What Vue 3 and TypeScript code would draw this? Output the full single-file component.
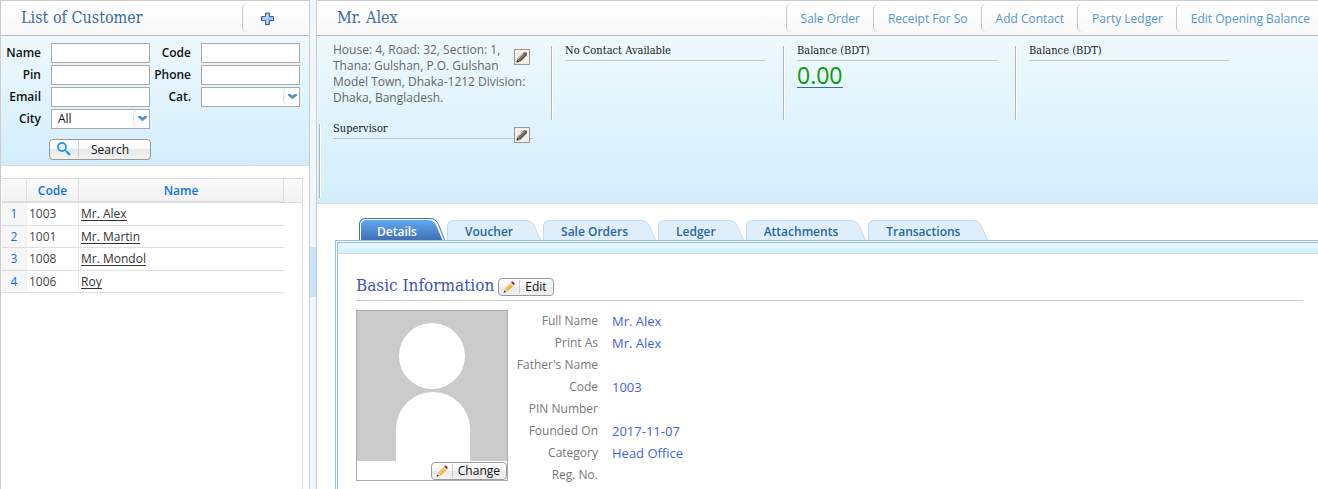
<script setup lang="ts">
import { ref } from 'vue'

interface Customer { code: string; name: string }

const actions = ['Sale Order', 'Receipt For So', 'Add Contact', 'Party Ledger', 'Edit Opening Balance']
const tabs = ['Details', 'Voucher', 'Sale Orders', 'Ledger', 'Attachments', 'Transactions']
const activeTab = ref('Details')
const city = ref('All')
const category = ref('')

const customers: Customer[] = [
  { code: '1003', name: 'Mr. Alex' },
  { code: '1001', name: 'Mr. Martin' },
  { code: '1008', name: 'Mr. Mondol' },
  { code: '1006', name: 'Roy' },
]

const details = [
  { label: 'Full Name', value: 'Mr. Alex' },
  { label: 'Print As', value: 'Mr. Alex' },
  { label: "Father's Name", value: '' },
  { label: 'Code', value: '1003' },
  { label: 'PIN Number', value: '' },
  { label: 'Founded On', value: '2017-11-07' },
  { label: 'Category', value: 'Head Office' },
  { label: 'Reg. No.', value: '' },
]
</script>

<template>
  <div class="app">
    <aside class="sidebar">
      <header class="bar">
        <h1 class="title side-title">List of Customer</h1>
        <button type="button" class="add" aria-label="Add customer">
          <svg width="13" height="13" viewBox="0 0 13 13">
            <path d="M4.500 1h4v3.500h4v4h-4v4h-4v-4h-4v-4h4z" fill="#9dbfec" stroke="#35609f" stroke-linejoin="round" />
            <path d="M6 2.500v3.500h-4M6 10.500v-3" fill="none" stroke="#cfe2fa" />
          </svg>
        </button>
      </header>

      <form class="filters" @submit.prevent>
        <div class="fields">
          <label for="f-name">Name</label><input id="f-name" type="text" />
          <label for="f-code">Code</label><input id="f-code" type="text" />
          <label for="f-pin">Pin</label><input id="f-pin" type="text" />
          <label for="f-phone">Phone</label><input id="f-phone" type="text" />
          <label for="f-email">Email</label><input id="f-email" type="text" />
          <label for="f-cat">Cat.</label>
          <div class="pick">
            <select id="f-cat" v-model="category"><option value=""></option></select>
            <svg class="arrow" width="18" height="18" viewBox="0 0 18 18"><path d="M3.500 1q-2 2-2 5v6q0 3 2 5" fill="none" stroke="#dedede" /><path d="M6 6h2.500l2 1.500 2-1.500h2.500v1.500l-4.500 3.800-4.500-3.800z" fill="#5795c6" /></svg>
          </div>
          <label for="f-city">City</label>
          <div class="pick">
            <select id="f-city" v-model="city"><option>All</option></select>
            <svg class="arrow" width="18" height="18" viewBox="0 0 18 18"><path d="M3.500 1q-2 2-2 5v6q0 3 2 5" fill="none" stroke="#dedede" /><path d="M6 6h2.500l2 1.500 2-1.500h2.500v1.500l-4.500 3.800-4.500-3.800z" fill="#5795c6" /></svg>
          </div>
        </div>
        <button type="submit" class="btn search">
          <span class="btn-icon"><svg width="15" height="15" viewBox="0 0 15 15" fill="none" stroke="#189bf5"><circle cx="5" cy="5" r="4" stroke-width="1.800" /><path d="M8 8l2 2" stroke-width="1.500" /><path d="M9.500 9.500l3.500 3.500" stroke-width="2.400" /></svg></span>
          <span class="btn-text">Search</span>
        </button>
      </form>

      <div class="grid-wrap">
        <table class="grid">
          <colgroup><col class="c-num" /><col class="c-code" /><col class="c-name" /><col class="c-end" /></colgroup>
          <thead><tr><th></th><th>Code</th><th>Name</th><th></th></tr></thead>
          <tbody>
            <tr v-for="(c, i) in customers" :key="c.code">
              <td class="num">{{ i + 1 }}</td>
              <td>{{ c.code }}</td>
              <td><a href="#">{{ c.name }}</a></td>
              <td class="blank"></td>
            </tr>
          </tbody>
        </table>
      </div>
    </aside>

    <div class="splitter"><div class="handle"></div></div>

    <main class="main">
      <header class="bar">
        <h1 class="title">Mr. Alex</h1>
        <nav class="actions">
          <a v-for="a in actions" :key="a" href="#">{{ a }}</a>
        </nav>
      </header>

      <section class="summary">
        <div class="cell plain">
          <p class="address">House: 4, Road: 32, Section: 1, Thana: Gulshan, P.O. Gulshan Model Town, Dhaka-1212 Division: Dhaka, Bangladesh.</p>
          <button type="button" class="pen" aria-label="Edit address">
            <svg width="12" height="12" viewBox="0 0 12 12"><path d="M2.500 9.500l7-7" stroke="#6e6e6e" stroke-width="4" /><path d="M2 8l5.500-5.500" stroke="#b5b5b5" /><path d="M4 10.200l6.200-6.200" stroke="#444" /><path d="M8 1.500h2.500l.5.500v2.500z" fill="#555" /><path d="M.5 11.500l.5-3 2.500 2.500z" fill="#222" /></svg>
          </button>
        </div>
        <div class="cell"><h2>No Contact Available</h2></div>
        <div class="cell"><h2>Balance (BDT)</h2><a class="amount" href="#">0.00</a></div>
        <div class="cell"><h2>Balance (BDT)</h2></div>
        <div class="cell">
          <h2>Supervisor</h2>
          <button type="button" class="pen" aria-label="Edit supervisor">
            <svg width="12" height="12" viewBox="0 0 12 12"><path d="M2.500 9.500l7-7" stroke="#6e6e6e" stroke-width="4" /><path d="M2 8l5.500-5.500" stroke="#b5b5b5" /><path d="M4 10.200l6.200-6.200" stroke="#444" /><path d="M8 1.500h2.500l.5.500v2.500z" fill="#555" /><path d="M.5 11.500l.5-3 2.500 2.500z" fill="#222" /></svg>
          </button>
        </div>
      </section>

      <div class="tabs" role="tablist">
        <button v-for="t in tabs" :key="t" type="button" role="tab" class="tab" :class="{ active: t === activeTab }" :aria-selected="t === activeTab" @click="activeTab = t">
          <span class="tab-label">{{ t }}</span>
          <svg v-if="t === activeTab" class="cap" width="28" height="22" viewBox="0 0 28 22">
            <defs><linearGradient id="tabfill" x1="0" y1="0" x2="0" y2="1"><stop offset="0" stop-color="#62aaf5" /><stop offset="1" stop-color="#3f70b4" /></linearGradient></defs>
            <path d="M0 0h13q6 0 8.500 6l6.500 16h-28z" fill="#fff" />
            <path d="M0 2h12q5 0 7.500 6l6 14h-25.500z" fill="url(#tabfill)" />
            <path d="M0 .5h13q6 0 8.500 6l6 15.500" fill="none" stroke="#3d74b8" />
          </svg>
          <svg v-else class="cap" width="28" height="20" viewBox="0 0 28 20">
            <path d="M0 0.500h13q6 0 8.500 6l6 13.500h-27.500z" fill="#deeefb" />
            <path d="M0 .5h13q6 0 8.500 6l6 13.500" fill="none" stroke="#c2dbee" />
          </svg>
        </button>
      </div>

      <section class="panel">
        <div class="strip"></div>
        <div class="content">
          <div class="section-head">
            <h2>Basic Information</h2>
            <button type="button" class="btn small">
              <span class="btn-icon"><svg width="12" height="12" viewBox="0 0 12 12"><path d="M2 8l5-5.500 3 3-5.500 5z" fill="#f2b233" /><path d="M3 9l5-5.500" stroke="#ffd56b" /><path d="M7 2.500l1-1 3 3-1 1z" fill="#e8dfd0" /><path d="M8 1.500l1-1h1l1.500 1.500v1.500l-.5 1z" fill="#b3202c" /><path d="M2 8l2.500 2.500-3.500 1z" fill="#e9c9a0" /><path d="M1.500 9.500l1.500 1.500-2.500.7z" fill="#222" /></svg></span>
              <span class="btn-text">Edit</span>
            </button>
          </div>
          <div class="profile">
            <div class="photo">
              <svg viewBox="0 0 150 150" role="img" aria-label="Profile photo"><path d="M0 0h150v150h-150z" fill="#cbcbcb" /><circle cx="75" cy="45" r="33" fill="#fff" /><path d="M39 150v-32a37 37 0 0 1 74 0v32z" fill="#fff" /></svg>
              <button type="button" class="btn small">
                <span class="btn-icon"><svg width="12" height="12" viewBox="0 0 12 12"><path d="M2 8l5-5.500 3 3-5.500 5z" fill="#f2b233" /><path d="M3 9l5-5.500" stroke="#ffd56b" /><path d="M7 2.500l1-1 3 3-1 1z" fill="#e8dfd0" /><path d="M8 1.500l1-1h1l1.500 1.500v1.500l-.5 1z" fill="#b3202c" /><path d="M2 8l2.500 2.500-3.500 1z" fill="#e9c9a0" /><path d="M1.500 9.500l1.500 1.500-2.500.7z" fill="#222" /></svg></span>
                <span class="btn-text">Change</span>
              </button>
            </div>
            <dl class="details">
              <template v-for="d in details" :key="d.label"><dt>{{ d.label }}</dt><dd>{{ d.value }}</dd></template>
            </dl>
          </div>
        </div>
      </section>
    </main>
  </div>
</template>

<style>
body { margin: 0; overflow: hidden; background: #fff; }
</style>

<style scoped>
.app { display: flex; height: 100vh; overflow: hidden; font: 12px/16px "Open Sans", "Noto Sans", sans-serif; color: #444; }
.app *, .app *::before { box-sizing: border-box; }
h1, h2, p, dl, dd { margin: 0; font-weight: 400; }
button, input, select { font: inherit; }
a { text-decoration: none; }
.sidebar { flex: 0 0 310px; display: flex; flex-direction: column; border: 1px solid #ccc; border-bottom: 0; }
.bar { display: flex; align-items: center; height: 35px; flex: none; background: linear-gradient(#fff, #f8f8f8); border-bottom: 1px solid #bbb; }
.title { flex: 1; padding-left: 20px; font: 16px/32px "DejaVu Serif Condensed", "DejaVu Serif", serif; font-stretch: condensed; color: #3a6ba5; white-space: nowrap; }
.add { width: 67px; height: 28px; padding: 0 18px; display: flex; align-items: center; background: none; border: 0; border-left: 1px solid #c6c6c6; border-radius: 5px; }

.filters { height: 130px; flex: none; padding: 7px 9px 0 7px; background: linear-gradient(#eef9fe, #d2eefb); border-bottom: 1px solid #ddd; color: #111; }
.fields { display: grid; grid-template-columns: 33px 99px 31px 99px; column-gap: 10px; row-gap: 2px; }
.fields label { justify-self: end; line-height: 20px; font-weight: 600; white-space: nowrap; }
.fields input, .fields select { width: 100%; height: 20px; padding: 0 6px; border: 1px solid #aaa; border-radius: 0; background: #fff; color: #111; appearance: none; display: block; }
.pick { position: relative; }
.arrow { position: absolute; right: 0; top: 1px; pointer-events: none; }
.btn { display: flex; align-items: center; padding: 0; border: 1px solid #999; border-radius: 4px; color: #111; background: linear-gradient(#fff, #f7f7f7 50%, #e9e9e9 50%, #f2f2f2); }
.btn-icon { display: flex; align-items: center; justify-content: center; border-right: 1px solid #ccc; }
.search { width: 102px; height: 21px; margin: 10px 0 0 41px; }
.search .btn-icon { width: 29px; height: 17px; }
.search .btn-text { padding-left: 12px; }

.grid-wrap { flex: 1; margin: 12px 6px 0 1px; border-right: 1px solid #ddd; border-top: 1px solid #ddd; }
.grid { width: 100%; table-layout: fixed; border-collapse: separate; border-spacing: 0; }
.c-num { width: 25px; } .c-code { width: 52px; } .c-name { width: auto; } .c-end { width: 18px; }
.grid th { height: 24px; padding: 2px 0 0; background: linear-gradient(#fafafa, #f2f2f2); border-right: 1px solid #ddd; border-bottom: 2px solid #ddd; color: #0b72e7; font-weight: 600; }
.grid th:last-child { border-right: 0; border-bottom-width: 1px; }
.grid td { height: 22px; padding: 0 2px; border-bottom: 1px solid #ddd; border-right: 1px solid #eee; }
.grid tr:nth-child(odd) td { height: 23px; }
.grid td:nth-child(3) { border-right: 0; }
.grid td.num { padding: 0; background: #f6f6f6; text-align: center; color: #0b72e7; }
.grid td.blank { border: 0; }
.grid a { color: #333; border-bottom: 1px solid #333; line-height: 13px; display: inline-block; }

.splitter { flex: 0 0 6px; background: #eff7fa; display: flex; align-items: center; }
.handle { width: 6px; height: 50px; margin-top: 54px; background: #c9e5f7; }

.main { flex: 1; min-width: 0; display: flex; flex-direction: column; border-left: 1px solid #ccc; border-top: 1px solid #ccc; }
.actions { display: flex; padding-right: 8px; }
.actions a { padding: 0 13px 0 14px; line-height: 30px; height: 28px; white-space: nowrap; color: #5597cb; border-left: 1px solid #c6c6c6; border-radius: 5px; }
.actions a:last-child { padding-right: 0; }
.summary { flex: none; display: grid; grid-template-columns: repeat(4, 232px); grid-auto-rows: 78px; height: 168px; padding: 6px 0 0 2px; background: linear-gradient(#eef9fe, #d2eefb); border-bottom: 1px solid #ddd; }
.cell { position: relative; padding-left: 14px; }
.cell::before { content: ""; position: absolute; left: 0; top: 4px; bottom: 0; width: 1px; background: #b4b4b4; box-shadow: 1px 0 #fff; }
.plain::before { display: none; }
.cell h2 { width: 200px; border-bottom: 1px solid #c4c4c4; font: 11px/18px "DejaVu Serif Condensed", "DejaVu Serif", serif; font-stretch: condensed; color: #222; }
.address { width: 196px; color: #666; }
.pen { position: absolute; left: 195px; top: 7px; width: 16px; height: 16px; padding: 1px; display: flex; border: 1px solid #999; background: #f5eee2; }
.amount { display: inline-block; margin-top: 3px; font-size: 23px; line-height: 23px; color: #0a9a0a; border-bottom: 1px solid #2f6fae; }

.tabs { flex: none; display: flex; align-items: flex-end; gap: 2px; height: 36px; padding-left: 42px; }
.tab { display: flex; padding: 0; border: 0; background: none; color: #2c6499; font-weight: 600; }
.tab-label { height: 20px; padding: 0 0 0 17px; line-height: 22px; background: #deeefb; border: solid #c2dbee; border-width: 1px 0 0 1px; border-radius: 6px 0 0 0; white-space: nowrap; }
.active { color: #fff; }
.active .tab-label { height: 22px; line-height: 25px; border-color: #3d74b8; background: linear-gradient(#62aaf5, #3f70b4); box-shadow: inset 1px 1px #fff; }
.panel { flex: 1 0 auto; margin-left: 18px; border: 3px double #92c0f3; border-width: 3px 0 0 3px; }
.strip { height: 11px; background: linear-gradient(#e9f8fe, #d3effa); border-bottom: 1px solid #ddd; }
.content { padding: 20px 15px 0 18px; }
.section-head { display: flex; align-items: center; gap: 4px; height: 27px; border-bottom: 1px solid #ccc; }
.section-head h2 { padding-bottom: 3px; font: 17px/23px "DejaVu Serif Condensed", "DejaVu Serif", serif; font-stretch: condensed; color: #3f55b5; }
.small { height: 18px; }
.small .btn-icon { width: 21px; height: 14px; }
.small .btn-text { padding: 0 6px 0 5px; }
.profile { display: flex; margin-top: 9px; }
.photo { width: 152px; height: 171px; border: 1px solid #aaa; display: flex; flex-direction: column; align-items: flex-end; }
.photo > svg { width: 150px; height: 150px; flex: none; }
.photo .btn { margin-top: 1px; }
.details { display: grid; grid-template-columns: 90px auto; grid-auto-rows: 22px; column-gap: 14px; line-height: 22px; }
.details dt { text-align: right; color: #777; white-space: nowrap; }
.details dd { font-size: 13px; color: #3f63e0; }
</style>
